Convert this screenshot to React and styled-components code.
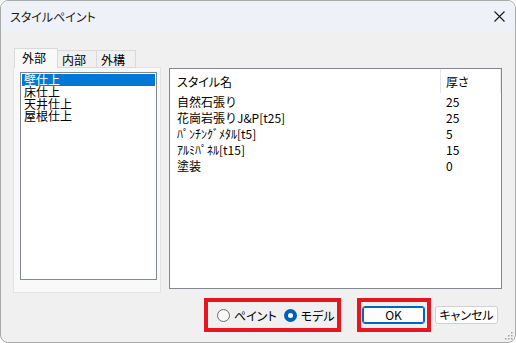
import React from 'react'
import styled, { createGlobalStyle } from 'styled-components'

const GlobalStyle = createGlobalStyle`
  html, body {
    margin: 0;
    padding: 0;
    background: #ffffff;
  }
  * {
    box-sizing: border-box;
  }
`

const FONT = `"Noto Sans CJK JP", "Noto Sans", sans-serif`

const WindowStyle = styled.div`
  position: relative;
  width: 516px;
  height: 343px;
  border: 1px solid #a9a9a9;
  border-radius: 8px;
  overflow: hidden;
  background: #f0f0f0;
  display: flex;
  flex-direction: column;
  font-family: ${FONT};
  font-feature-settings: 'palt';
  color: #000;
`

const TitleBarStyle = styled.div`
  flex: none;
  height: 30px;
  padding: 0 10px 0 9px;
  background: #eef2f8;
  display: flex;
  align-items: center;
  justify-content: space-between;
  font-size: 12px;
  color: #1a1a1a;
`

const CloseStyle = styled.div`
  width: 12px;
  height: 12px;
  display: flex;
  align-items: center;
  justify-content: center;
`

const BodyStyle = styled.div`
  flex: 1;
  padding: 17px 13px 0 12px;
  display: flex;
  flex-direction: column;
`

const MainRowStyle = styled.div`
  display: flex;
  align-items: flex-start;
  gap: 8px;
`

const TabColumnStyle = styled.div`
  width: 148px;
  display: flex;
  flex-direction: column;
`

const TabStripStyle = styled.div`
  position: relative;
  z-index: 1;
  height: 20px;
  padding-left: 1px;
  display: flex;
  align-items: flex-end;
`

const TabStyle = styled.div`
  width: ${p => (p.active ? 44 : 40)}px;
  height: ${p => (p.active ? 20 : 18)}px;
  margin-left: ${p => (p.first ? 0 : -1)}px;
  padding-left: ${p => (p.active ? 7 : 4)}px;
  border: 1px solid #dadada;
  border-bottom: ${p => (p.active ? 'none' : '1px solid #dadada')};
  background: ${p => (p.active ? '#f9f9f9' : '#f0f0f0')};
  font-size: 12px;
  line-height: ${p => (p.active ? 18 : 17)}px;
  position: relative;
  z-index: ${p => (p.active ? 2 : 0)};
`

const TabPanelStyle = styled.div`
  margin-top: -1px;
  height: 226px;
  border: 1px solid #e3e3e3;
  background: #f9f9f9;
  padding: 4px 0 0 6px;
`

const ListBoxStyle = styled.div`
  width: 137px;
  height: 208px;
  border: 1px solid #828790;
  background: #fff;
  padding: 1px;
  font-feature-settings: normal;
`

const ListBoxItemStyle = styled.div`
  height: 12px;
  line-height: 12px;
  font-size: 12px;
  padding-left: 2px;
  background: ${p => (p.selected ? '#0078d7' : 'transparent')};
  color: ${p => (p.selected ? '#fff' : '#000')};
`

const ListViewStyle = styled.div`
  margin-top: 20px;
  width: 333px;
  height: 221px;
  border: 1px solid #828790;
  background: #fff;
`

const HeaderRowStyle = styled.div`
  display: flex;
  height: 24px;
  align-items: stretch;
  font-size: 12px;
`

const RowStyle = styled.div`
  display: flex;
  height: 16px;
  align-items: center;
  font-size: 12px;
  font-feature-settings: normal;
`

const NameCellStyle = styled.div`
  width: 271px;
  padding-left: 7px;
  display: flex;
  align-items: center;
  white-space: nowrap;
  border-right: 1px solid ${p => (p.header ? '#e5e5e5' : 'transparent')};
`

const SizeCellStyle = styled.div`
  flex: 1;
  padding-left: 5px;
  display: flex;
  align-items: center;
  border-right: 1px solid ${p => (p.header ? '#eeeeee' : 'transparent')};
`

const BottomRowStyle = styled.div`
  margin-top: 5px;
  padding-right: 4px;
  display: flex;
  align-items: center;
  justify-content: flex-end;
`

const HighlightStyle = styled.div`
  flex: none;
  height: 34px;
  width: ${p => p.width}px;
  margin-right: ${p => p.gap}px;
  border: 4px solid #e8151f;
  display: flex;
  align-items: center;
  padding-left: ${p => p.pad}px;
`

const RadioStyle = styled.label`
  flex: none;
  display: flex;
  align-items: center;
  gap: 4px;
  margin-right: 7px;
  font-size: 12px;
  white-space: nowrap;
`

const RadioCircleStyle = styled.span`
  flex: none;
  width: 13px;
  height: 13px;
  border-radius: 50%;
  border: ${p => (p.checked ? 'none' : '1px solid #6b6b6b')};
  background: ${p => (p.checked ? '#005fb8' : '#f7f7f7')};
  display: flex;
  align-items: center;
  justify-content: center;
  &::after {
    content: '';
    display: ${p => (p.checked ? 'block' : 'none')};
    width: 5px;
    height: 5px;
    border-radius: 50%;
    background: #fff;
  }
`

const ButtonStyle = styled.button`
  flex: none;
  width: 63px;
  height: 18px;
  padding: 0;
  border-radius: 3px;
  border: 1px solid ${p => (p.primary ? '#0067c0' : '#d0d0d0')};
  box-shadow: ${p => (p.primary ? 'inset 0 0 0 1px #0067c0' : 'none')};
  background: #fdfdfd;
  font-family: ${FONT};
  font-feature-settings: 'palt';
  font-weight: 400;
  font-size: 12px;
  line-height: 16px;
  color: #000;
`

const GripStyle = styled.svg`
  position: absolute;
  right: 2px;
  bottom: 2px;
`

const items = ['壁仕上', '床仕上', '天井仕上', '屋根仕上']

const styles = [
  { name: '自然石張り', size: '25' },
  { name: '花崗岩張りJ&P[t25]', size: '25' },
  { name: 'ﾊﾟﾝﾁﾝｸﾞﾒﾀﾙ[t5]', size: '5' },
  { name: 'ｱﾙﾐﾊﾟﾈﾙ[t15]', size: '15' },
  { name: '塗装', size: '0' },
]

const Radio = ({ checked, children }) => (
  <RadioStyle>
    <RadioCircleStyle checked={checked} />
    {children}
  </RadioStyle>
)

export default function App() {
  return (
    <>
      <GlobalStyle />
      <WindowStyle>
        <TitleBarStyle>
          <span>スタイルペイント</span>
          <CloseStyle>
            <svg width="11" height="11" viewBox="0 0 11 11">
              <path d="M0.5 0.5 L10.5 10.5 M10.5 0.5 L0.5 10.5" stroke="#1a1a1a" strokeWidth="1.1" />
            </svg>
          </CloseStyle>
        </TitleBarStyle>
        <BodyStyle>
          <MainRowStyle>
            <TabColumnStyle>
              <TabStripStyle>
                <TabStyle active first>外部</TabStyle>
                <TabStyle>内部</TabStyle>
                <TabStyle>外構</TabStyle>
              </TabStripStyle>
              <TabPanelStyle>
                <ListBoxStyle>
                  {items.map((item, i) => (
                    <ListBoxItemStyle key={item} selected={i === 0}>
                      {item}
                    </ListBoxItemStyle>
                  ))}
                </ListBoxStyle>
              </TabPanelStyle>
            </TabColumnStyle>
            <ListViewStyle>
              <HeaderRowStyle>
                <NameCellStyle header>スタイル名</NameCellStyle>
                <SizeCellStyle header>厚さ</SizeCellStyle>
              </HeaderRowStyle>
              {styles.map(s => (
                <RowStyle key={s.name}>
                  <NameCellStyle>{s.name}</NameCellStyle>
                  <SizeCellStyle>{s.size}</SizeCellStyle>
                </RowStyle>
              ))}
            </ListViewStyle>
          </MainRowStyle>
          <BottomRowStyle>
            <HighlightStyle width={137} gap={16} pad={9}>
              <Radio>ペイント</Radio>
              <Radio checked>モデル</Radio>
            </HighlightStyle>
            <HighlightStyle width={74} gap={4} pad={1}>
              <ButtonStyle primary>OK</ButtonStyle>
            </HighlightStyle>
            <ButtonStyle>キャンセル</ButtonStyle>
          </BottomRowStyle>
        </BodyStyle>
        <GripStyle width="9" height="9" viewBox="0 0 9 9">
          <rect x="7" y="1" width="1.5" height="1.5" fill="#a0a0a0" />
          <rect x="4" y="4" width="1.5" height="1.5" fill="#a0a0a0" />
          <rect x="7" y="4" width="1.5" height="1.5" fill="#a0a0a0" />
          <rect x="1" y="7" width="1.5" height="1.5" fill="#a0a0a0" />
          <rect x="4" y="7" width="1.5" height="1.5" fill="#a0a0a0" />
          <rect x="7" y="7" width="1.5" height="1.5" fill="#a0a0a0" />
        </GripStyle>
      </WindowStyle>
    </>
  )
}
